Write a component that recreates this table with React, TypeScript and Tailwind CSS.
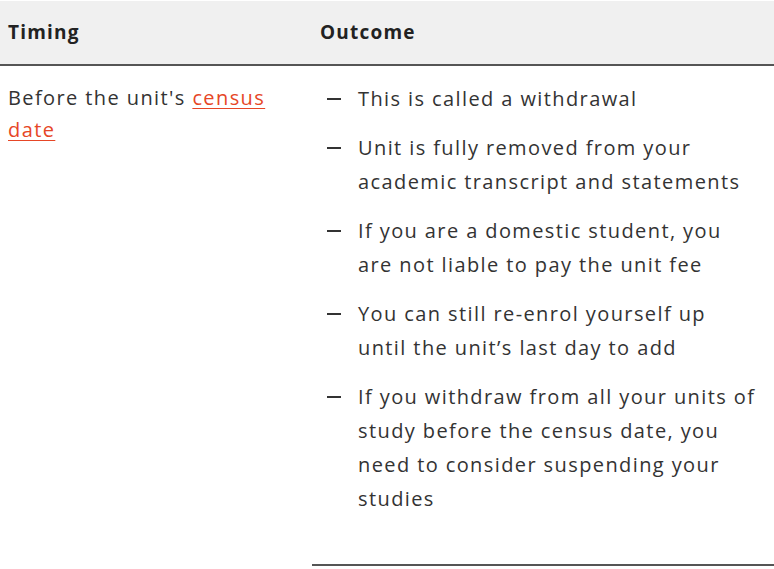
const outcomes = [
  'This is called a withdrawal',
  'Unit is fully removed from your academic transcript and statements',
  'If you are a domestic student, you are not liable to pay the unit fee',
  'You can still re-enrol yourself up until the unit\u2019s last day to add',
  'If you withdraw from all your units of study before the census date, you need to consider suspending your studies',
];

export default function App() {
  return (
    <div className="w-[774px] h-[569px] overflow-hidden bg-white font-['Open_Sans',sans-serif] text-[#333]">
      <table className="w-full border-collapse mt-px">
        <thead>
          <tr className="bg-[#f0f0f0] border-b-2 border-[#555]">
            <th className="w-[312px] h-[64px] px-2 text-left align-middle text-[19px] font-bold tracking-[1.2px] text-[#222]">Timing</th>
            <th className="px-2 text-left align-middle text-[19px] font-bold tracking-[1.2px] text-[#222]">Outcome</th>
          </tr>
        </thead>
        <tbody>
          <tr>
            <td className="align-top px-2 pt-[16px] text-[20px] leading-[32px] tracking-[1.4px]">
              Before the unit's{' '}
              <a href="#" className="text-[#e64626] underline underline-offset-[3px] decoration-1">census date</a>
            </td>
            <td className="align-top pt-[16px] border-b-2 border-[#555]">
              <ul className="pl-[15px] pr-[15px] pb-[48px] flex flex-col gap-[15px]">
                {outcomes.map((item) => (
                  <li key={item} className="flex text-[20px] leading-[34px] tracking-[1.4px]">
                    <span className="w-[31px] shrink-0 flex items-center h-[34px]">
                      <span className="block w-[14px] h-[2px] bg-[#333]" />
                    </span>
                    <span>{item}</span>
                  </li>
                ))}
              </ul>
            </td>
          </tr>
        </tbody>
      </table>
    </div>
  );
}
